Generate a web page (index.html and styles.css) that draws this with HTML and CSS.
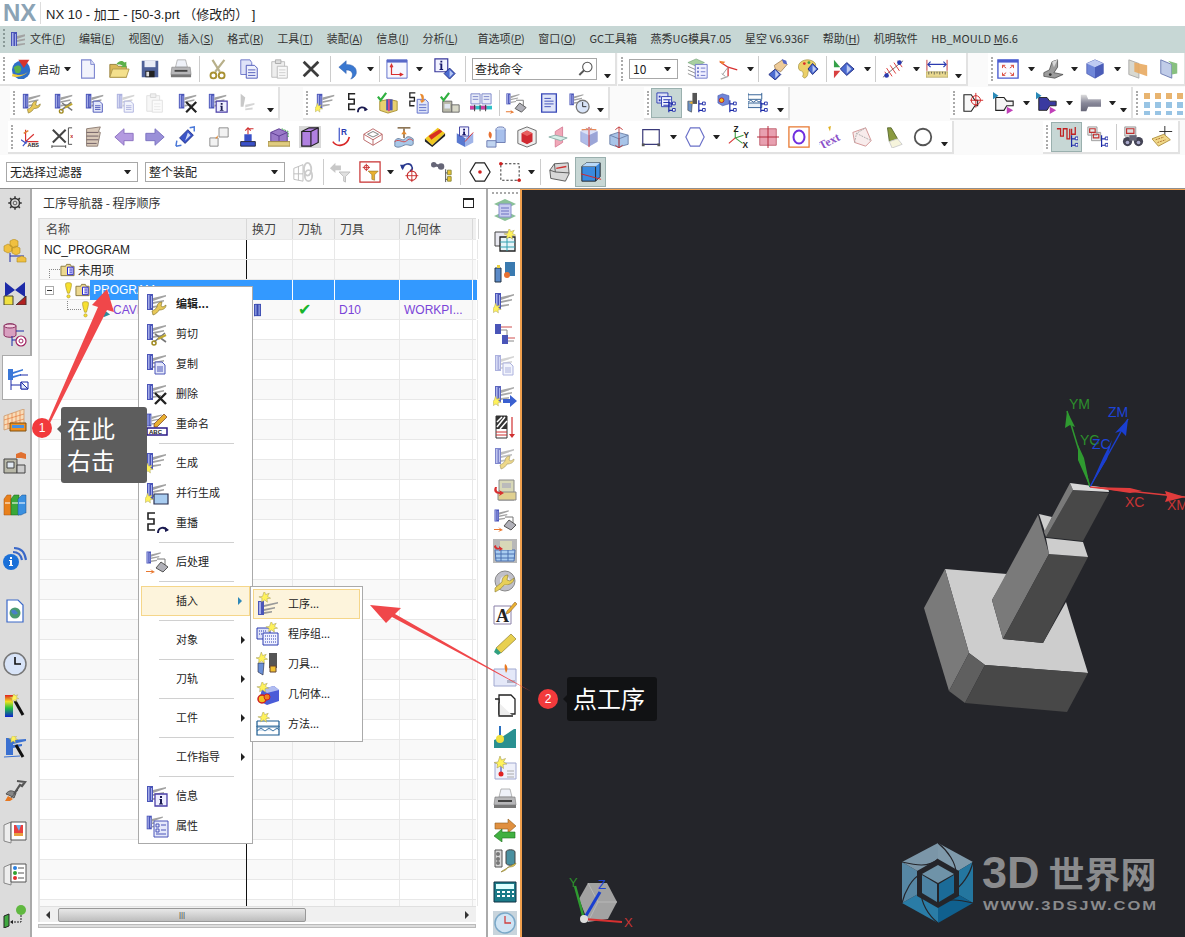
FILE: index.html
```html
<!DOCTYPE html>
<html lang="zh">
<head>
<meta charset="utf-8">
<title>NX 10 - 加工</title>
<link rel="stylesheet" href="styles.css">
</head>
<body>
<svg class="defs" aria-hidden="true">
<defs>
<g id="opb"><path d="M2 2h6v16H2z" fill="#4a55b8"/><path d="M3 3h1.500v14H3zM6 4h1v12H6z" fill="#a4ace8"/><path d="M8 6l13-3v1.500L8 9zM8 10l11-2v1.500L8 12zM8 14l8-1v1.500L8 16z" fill="#a2a2a2"/></g>
<g id="gw"><path d="M8 23c3-1 5-3 6-5 3 0 7-1 7-5l-3 2-2-1 1-4c-3 0-5 2-5 5-1 2-3 3-5 4z" fill="#e8c858" stroke="#8a7a30" stroke-width=".7"/></g>
<g id="gs"><path d="M10 12l11 8M20 11L9 20" stroke="#777" stroke-width="1.600"/><circle cx="9" cy="21" r="2" fill="none" stroke="#a08a20" stroke-width="1.500"/><path d="M13 17l8-4" stroke="#c0a830" stroke-width="2"/></g>
<g id="gc"><path d="M10 10h7l3 3v9H10z" fill="#e4e8fa" stroke="#4a55b8"/><path d="M12 15h6M12 17h6M12 19h6" stroke="#4a55b8"/></g>
<g id="gx"><path d="M10 11l11 11M21 11L10 22" stroke="#222" stroke-width="2.400"/></g>
<g id="gi"><path d="M10 10h12v12H10z" fill="#eef" stroke="#4a3fa8" stroke-width="1.300"/><path d="M15 12h2v2h-2zM14.500 15H17v4.500h1v1h-4v-1h1V16h-.5z" fill="#1a1a50"/></g>
<g id="gk"><path d="M7 0l1.500 4 4-1.500L10.500 6 14 8l-4 .5.500 4L7.500 10 4 12l.500-4L1 6.500l4-.5z" fill="#fff25a" stroke="#a8a060" stroke-width=".6"/></g>
<g id="gt"><path d="M14 9v13M14 13h4M14 20h4" stroke="#1c2aa8" stroke-width="1.300" fill="none"/><path d="M18 11h3v3h-3zM18 18h3v3h-3z" fill="#fff" stroke="#1c2aa8"/></g>
<g id="gcube"><path d="M12 2l9 4v11l-9 5-9-5V6z" fill="#6f86d8" stroke="#3f4ea8" stroke-width=".7"/><path d="M3 6l9 4 9-4-9-4z" fill="#bfcaf2"/><path d="M12 10v12l9-5V6z" fill="#4a5cb8"/></g>
<symbol id="start" viewBox="0 0 24 24"><circle cx="11" cy="13" r="10" fill="#2d6fc8"/><path d="M3 10c5-4 9-1 8 3s-3 4-6 3z" fill="#5cb04a"/><path d="M1 20c8 2 17-1 20-9-2 6-10 10-19 6z" fill="#f0c838"/><path d="M8 2h12l-6 9z" fill="#d8342c"/></symbol>
<symbol id="new" viewBox="0 0 24 24"><path d="M5 2h10l4 5v15H5z" fill="#f2f3fc" stroke="#7d86d0" stroke-width="1.200"/><path d="M15 2v5h4" fill="#dfe2f6" stroke="#7d86d0"/></symbol>
<symbol id="open" viewBox="0 0 24 24"><path d="M2 7h7l2 2h9v12H2z" fill="#d9b858" stroke="#96803c"/><path d="M2 21l3-9h18l-3 9z" fill="#f4e08c" stroke="#b09a50"/><path d="M9 7c2-4 7-5 9-2l2-1v6h-6l2-2c-2-1-4-1-7-1z" fill="#5cb04a"/></symbol>
<symbol id="save" viewBox="0 0 24 24"><path d="M3 3h18v18H3z" fill="#4e6198"/><path d="M6 3h12v7H6z" fill="#e8ecf6"/><path d="M7 14h10v7H7z" fill="#222"/><path d="M8 15h3v5H8z" fill="#ddd"/></symbol>
<symbol id="print" viewBox="0 0 24 24"><path d="M8 2h9l2 8H6z" fill="#eef1f8" stroke="#999" stroke-width=".7"/><path d="M2 10h20l1 8H1z" fill="#b6b6b8" stroke="#777" stroke-width=".6"/><path d="M1 18h22v3H1z" fill="#777"/><path d="M5 13h14v2H5z" fill="#444"/></symbol>
<symbol id="cut" viewBox="0 0 24 24"><path d="M6 2l8 13M19 2L9 15" stroke="#b8b08a" stroke-width="2.400"/><circle cx="7" cy="19" r="3.200" fill="none" stroke="#a89030" stroke-width="2"/><circle cx="16" cy="19" r="3.200" fill="none" stroke="#a89030" stroke-width="2"/></symbol>
<symbol id="copy" viewBox="0 0 24 24"><path d="M3 2h10l2 3v13H3z" fill="#dfe3f8" stroke="#6a74c8"/><path d="M9 8h9l3 3v11H9z" fill="#eef0fc" stroke="#4a55b8"/><path d="M11 13h8M11 16h8M11 19h8" stroke="#4a55b8"/></symbol>
<symbol id="paste" viewBox="0 0 24 24"><path d="M3 4h14v17H3z" fill="#eee" stroke="#bbb"/><path d="M7 2h6v4H7z" fill="#ddd" stroke="#aaa"/><path d="M9 9h11v13H9z" fill="#f8f8f8" stroke="#bbb"/><path d="M11 13h7M11 16h7M11 19h7" stroke="#ccc"/></symbol>
<symbol id="x" viewBox="0 0 24 24"><path d="M4 4l16 16M20 4L4 20" stroke="#3c3c3c" stroke-width="3"/></symbol>
<symbol id="undo" viewBox="0 0 24 24"><path d="M2 10l8-7v4c7 0 12 3 11 10-1 3-3 5-6 6 3-4 3-10-5-10v4z" fill="#3a78d0" stroke="#2a58a8" stroke-width=".5"/></symbol>
<symbol id="wcs" viewBox="0 0 24 24"><path d="M1 2h22v20H1z" fill="#f6f7ff" stroke="#5868c8"/><path d="M1 2h22v3H1z" fill="#5868c8"/><path d="M6 9v9h11M4.500 10L6 7l1.500 3M15 16.500l3 1.500-3 1.500" stroke="#d83030" fill="none" stroke-width="1.300"/></symbol>
<symbol id="infod" viewBox="0 0 24 24"><path d="M1 1h14v14H1z" fill="#f2f2ff" stroke="#38389c" stroke-width="1.300"/><path d="M7 3h2v2H7zM6 6h3v6h1v1H6v-1h1V7H6z" fill="#16166a"/><path d="M17 11l6 6-6 6-6-6z" fill="#4a6ad0" stroke="#1f2a80"/><path d="M17 13l4 4-4 4z" fill="#b8c8f2"/></symbol>
<symbol id="glass" viewBox="0 0 24 24"><circle cx="14" cy="9" r="7" fill="#fff" stroke="#555" stroke-width="1.600"/><path d="M9 14l-7 7" stroke="#555" stroke-width="3"/></symbol>
<symbol id="layers" viewBox="0 0 24 24"><path d="M1 5l9-4 9 4-9 4z" fill="#a8d0a0" stroke="#6a9a70" stroke-width=".6"/><path d="M1 9l9 4M1 13l9 4M1 17l9 4" stroke="#8a8a8a"/><path d="M9 7h13v15H9z" fill="#f0f0ff" stroke="#6a74c8"/><path d="M11 10h2v2h-2zM11 14h2v2h-2zM11 18h2v2h-2z" fill="#6a74c8"/><path d="M15 11h5M15 15h5M15 19h5" stroke="#6a74c8"/></symbol>
<symbol id="csys2" viewBox="0 0 24 24"><path d="M11 10L2 4M11 10v10M11 10l10 3" stroke="#d83030" stroke-width="1.400"/><path d="M1 3l7 1-3 3z" fill="#f08030"/><path d="M11 20l-8 3" stroke="#aaa" stroke-width="1.400"/><path d="M4 17l4 3M11 10l-6 8" stroke="#999"/></symbol>
<symbol id="hand" viewBox="0 0 24 24"><path d="M9 12l6 6-6 6-7-6z" fill="#4a6ad0" stroke="#1f2a80"/><path d="M9 13l4 5-4 4z" fill="#c0ccf2"/><path d="M8 8l9-6 5 5-7 8-6-3z" fill="#eecb98" stroke="#8a6a40" stroke-width=".7"/><path d="M16 1l5 2 1 4-4-1z" fill="#5464c8"/></symbol>
<symbol id="palette" viewBox="0 0 24 24"><path d="M2 7c3-6 14-7 18-1 2 5-4 7-7 7-2 4 0 7-5 9l-2-2c2-3 0-5-1-6-3 0-4-3-3-7z" fill="#ecd068" stroke="#9a8a3c" stroke-width=".7"/><circle cx="8" cy="6" r="1.500" fill="#d83030"/><circle cx="13" cy="5" r="1.500" fill="#3fa040"/><path d="M17 6l6 6-6 6-5-6z" fill="#4a6ad0" stroke="#1f2a80"/><path d="M17 8l4 4-4 4z" fill="#c0ccf2"/></symbol>
<symbol id="diamt" viewBox="0 0 24 24"><path d="M15 5l8 7-8 7-7-7z" fill="#4a6ad0" stroke="#1f2a80"/><path d="M15 7l5 5-5 5z" fill="#c0ccf2"/><path d="M1 2l7 8H1z" fill="#34a048"/><path d="M1 14h7l-7 8z" fill="#d84040"/></symbol>
<symbol id="hatch" viewBox="0 0 24 24"><path d="M1 21L23 3" stroke="#444" stroke-width=".8"/><path d="M5 11l6 9M9 8l6 9M13 5l6 9M3 15l4 5M17 3l5 7" stroke="#d83030"/><circle cx="19" cy="5" r="2.500" fill="#2a3ab0"/><circle cx="5" cy="19" r="2.500" fill="#2a3ab0"/></symbol>
<symbol id="ruler" viewBox="0 0 24 24"><path d="M1 2v12M23 2v12" stroke="#c03030"/><path d="M2 7h20M5 4L2 7l3 3M19 4l3 3-3 3" stroke="#2a3ab0" fill="none" stroke-width="1.200"/><path d="M0 15h24v6H0z" fill="#e8d890" stroke="#998a40" stroke-width=".6"/><path d="M3 15v3M6 15v2M9 15v3M12 15v2M15 15v3M18 15v2M21 15v3" stroke="#665"/></symbol>
<symbol id="fit" viewBox="0 0 24 24"><path d="M1 2h22v20H1z" fill="#fbfbff" stroke="#4a5cd0" stroke-width="1.500"/><path d="M1 2h22v3H1z" fill="#4a5cd0"/><path d="M6 8l4 3M6 8h3M6 8v3M18 8l-4 3M18 8h-3M18 8v3M6 19l4-3M6 19h3M6 19v-3M18 19l-4-3M18 19h-3M18 19v-3" stroke="#d84030" fill="none"/></symbol>
<symbol id="bracket" viewBox="0 0 24 24"><path d="M2 16l6-3 3-9 6-2v8l-4 6 10 2-9 4-12-2z" fill="#9c9c9c" stroke="#444" stroke-width=".8"/><path d="M11 4l6-2-4 8z" fill="#d8d8d8"/><circle cx="9" cy="18" r="1.500" fill="#333"/></symbol>
<symbol id="cube" viewBox="0 0 24 24"><use href="#gcube"/></symbol>
<symbol id="planeo" viewBox="0 0 24 24"><path d="M2 2l11 4v16L2 18z" fill="#d8d8d0" stroke="#aaa"/><path d="M8 5l14 3v12L8 15z" fill="#e8aa60" opacity=".9"/></symbol>
<symbol id="planeg" viewBox="0 0 24 24"><path d="M3 2l12 5v15L3 17z" fill="#c0cce8" stroke="#6a7ab0"/><path d="M11 3l10 3v11l-6 1V7z" fill="#88c080"/></symbol>
<symbol id="ow" viewBox="0 0 24 24"><use href="#opb"/><use href="#gw"/></symbol>
<symbol id="os" viewBox="0 0 24 24"><use href="#opb"/><use href="#gs"/></symbol>
<symbol id="oc" viewBox="0 0 24 24"><use href="#opb"/><use href="#gc"/></symbol>
<symbol id="ox" viewBox="0 0 24 24"><use href="#opb"/><use href="#gx"/></symbol>
<symbol id="oi" viewBox="0 0 24 24"><use href="#opb"/><use href="#gi"/></symbol>
<symbol id="ocg" viewBox="0 0 24 24"><g opacity=".45"><use href="#opb"/><use href="#gc"/></g></symbol>
<symbol id="ogr" viewBox="0 0 24 24"><g opacity=".4"><path d="M4 2l5 4-2 10H4z" fill="#777"/><path d="M9 14l10-2v2L9 17zM9 18l8-1v2l-8 1z" fill="#999"/></g></symbol>
<symbol id="gen" viewBox="0 0 24 24"><use href="#opb"/><g transform="translate(-3 12) scale(.8)"><use href="#gk"/></g></symbol>
<symbol id="genp" viewBox="0 0 24 24"><use href="#opb"/><g transform="translate(-3 12) scale(.8)"><use href="#gk"/></g><path d="M9 13h14v10H9z" fill="#a8ccf0" stroke="#2a3050" stroke-width="1.200"/></symbol>
<symbol id="replay" viewBox="0 0 24 24"><path d="M10 2H3v6h6v5H3v6h7" fill="none" stroke="#222" stroke-width="1.600"/><path d="M13 22c0-6 7-7 9-2" fill="none" stroke="#1a1a50" stroke-width="2"/><path d="M20 16l4 3-4 2z" fill="#1a1a50"/></symbol>
<symbol id="chk" viewBox="0 0 24 24"><path d="M3 10l10-2 9 2v10l-10 3-9-3z" fill="#e8d070" stroke="#a89030"/><path d="M10 8h7v12h-7z" fill="#4a55b8"/><path d="M12 8h2v13h-2z" fill="#d84888"/><path d="M1 5l3 4 6-8" fill="none" stroke="#30b040" stroke-width="2.400"/></symbol>
<symbol id="sdoc" viewBox="0 0 24 24"><path d="M8 1H2v5h5v4H2v5h5" fill="none" stroke="#222" stroke-width="1.400"/><path d="M10 8h9l3 3v12H10z" fill="#dfe5f8" stroke="#5a6ac8"/><path d="M12 14h8M12 17h8M12 20h8" stroke="#5a6ac8"/><path d="M13 2c4 0 5 3 4 7l2 0-4 3-2-3h2c0-3-1-5-2-7z" fill="#e88a30"/></symbol>
<symbol id="chkm" viewBox="0 0 24 24"><path d="M4 10h10v12H4z" fill="#b8b8a8" stroke="#666"/><path d="M14 14h8v8h-8z" fill="#d8d8c8" stroke="#666"/><path d="M6 13h6v5H6z" fill="#dfe5f0"/><path d="M2 5l3 4 6-8" fill="none" stroke="#30b040" stroke-width="2.400"/></symbol>
<symbol id="book" viewBox="0 0 24 24"><path d="M1 2h10v11H1zM13 2h10v11H13z" fill="#e8ecf8" stroke="#7a84c8"/><path d="M3 5h6M3 8h6M15 5h6M15 8h6" stroke="#7a84c8"/><path d="M0 15h24v4H0z" fill="#30c0c8"/><path d="M0 15h6v4H0zM12 15h6v4h-6z" fill="#d040a0"/><path d="M5 14v7M11 14v7M17 14v7" stroke="#333"/></symbol>
<symbol id="post" viewBox="0 0 24 24"><use href="#opb" transform="scale(.75)"/><path d="M12 9h8v6" fill="none" stroke="#777"/><path d="M11 18l5-6 7 5-5 5z" fill="#b0b0b8" stroke="#555"/><path d="M1 21h6l-2-2 5 3-5 2 2-2H1z" fill="#e87830"/></symbol>
<symbol id="docb" viewBox="0 0 24 24"><path d="M4 2h16v20H4z" fill="#dfe5f8" stroke="#3a4ab8" stroke-width="1.500"/><path d="M7 7h7M7 10h10M7 13h10M7 16h7" stroke="#3a4ab8"/></symbol>
<symbol id="oclock" viewBox="0 0 24 24"><use href="#opb" transform="scale(.8)"/><circle cx="16" cy="16" r="7" fill="#d8e4f8" stroke="#777" stroke-width="1.400"/><path d="M16 11v5h4" stroke="#222" fill="none"/></symbol>
<symbol id="tprog" viewBox="0 0 24 24"><path d="M1 1h12v11H1z" fill="#dfe3f8" stroke="#2a3ab0"/><path d="M6 5h11v11H6z" fill="#f0f2ff" stroke="#2a3ab0"/><path d="M3 4h2v2H3zM3 8h2v2H3zM8 8h8v1H8zM8 11h8v1H8zM8 14h8v1H8z" fill="#2a3ab0"/><use href="#gt"/></symbol>
<symbol id="ttool" viewBox="0 0 24 24"><path d="M2 10h5l-1 12-4-2z" fill="#6a90c8" stroke="#333" stroke-width=".6"/><path d="M7 1h5v12H7z" fill="#555"/><path d="M3 12l4-2v3z" fill="#f0b020"/><use href="#gt"/></symbol>
<symbol id="tgeom" viewBox="0 0 24 24"><path d="M6 2l7 2v9l-7 2-5-3V4z" fill="#6f86d8" stroke="#3f4ea8" stroke-width=".6"/><circle cx="5" cy="9" r="2.500" fill="#f0c020" stroke="#c02020"/><use href="#gt"/></symbol>
<symbol id="tmeth" viewBox="0 0 24 24"><path d="M0 3h15M0 1v7h15V1M0 11l3-2 3 2 3-2 3 2 3-2" stroke="#2a5a90" fill="none"/><path d="M0 12h15v5H0z" fill="#e8f0f8" stroke="#2a5a90"/><use href="#gt"/></symbol>
<symbol id="sh1" viewBox="0 0 24 24"><path d="M1 3h8l4 6h3v6h-3l-4 6H1z" fill="#f8f8f8" stroke="#222" stroke-width="1.200"/><circle cx="14" cy="9" r="5" fill="none" stroke="#d02020"/><path d="M14 1v16M8 9h14" stroke="#d02020"/></symbol>
<symbol id="sh2" viewBox="0 0 24 24"><path d="M3 6h9l3 4h7v5h-7l-3 5H3z" fill="#f4f4f4" stroke="#222" stroke-width="1.200"/><path d="M0 0l6 4-6 4z" fill="#2a8ab8"/><path d="M15 16l7 4-7 4z" fill="#c040b8"/></symbol>
<symbol id="sh3" viewBox="0 0 24 24"><path d="M3 6h9l3 4h7v5h-7l-3 5H3z" fill="#3a3aa0" stroke="#222"/><path d="M0 0l6 4-6 4z" fill="#2a8ab8"/><path d="M15 16l7 4-7 4z" fill="#c040b8"/></symbol>
<symbol id="tl" viewBox="0 0 24 24"><defs><linearGradient id="gm" x1="0" y1="0" x2="0" y2="1"><stop offset="0" stop-color="#ddd"/><stop offset=".5" stop-color="#889"/><stop offset="1" stop-color="#667"/></linearGradient></defs><path d="M2 3h6l2 5h14v8H10l-2 5H2z" fill="url(#gm)"/></symbol>
<symbol id="grid" viewBox="0 0 42 24"><path d="M1 2h6v6H1zM12 2h6v6h-6zM23 2h6v6h-6zM34 2h6v6h-6z" fill="#e8b470"/><path d="M1 11h6v6H1zM12 11h6v6h-6zM23 11h6v6h-6zM34 11h6v6h-6zM1 20h6v4H1zM12 20h6v4h-6zM23 20h6v4h-6zM34 20h6v4h-6z" fill="#98c4e4"/></symbol>
<symbol id="abs" viewBox="0 0 24 24"><path d="M5 17L5 4M5 17h14M5 17l9-8" stroke="#d83030" fill="none" stroke-width="1.300"/><path d="M2 22l5-6M0 15l6 4" stroke="#3a50c8" stroke-width="1.300"/><path d="M3 8l5-3" stroke="#e08030" stroke-width="1.600"/><text x="7" y="23" class="mini">ABS</text></symbol>
<symbol id="xd" viewBox="0 0 24 24"><path d="M2 4l14 14M16 4L2 18" stroke="#444" stroke-width="2.200"/><path d="M19 2h4M19 2v18M19 20h4M1 21v3M1 22h15M16 21v3" stroke="#444"/><text x="21" y="13" class="mini red">x</text></symbol>
<symbol id="sheets" viewBox="0 0 24 24"><path d="M5 3l15-2-2 5 2 1-3 15H5z" fill="#d8c8b8" stroke="#8a7a70"/><path d="M5 7h13M5 11h13M5 15h13M5 19h11" stroke="#6a5a60"/></symbol>
<symbol id="la" viewBox="0 0 24 24"><path d="M2 12l10-9v5h10v8H12v5z" fill="#b49ae0" stroke="#8a70c0"/></symbol>
<symbol id="ra" viewBox="0 0 24 24"><path d="M22 12l-10-9v5H2v8h10v5z" fill="#9a90d8" stroke="#7a70c0"/></symbol>
<symbol id="dia2" viewBox="0 0 24 24"><path d="M14 4l6 6-9 9-6-6z" fill="#3a54c8" stroke="#20308a"/><path d="M14 7l3 3-6 6z" fill="#d0daf8"/><path d="M16 2l5-1v5M1 22l1-6M1 22l6-1" stroke="#4a78d8" stroke-width="1.600" fill="none"/></symbol>
<symbol id="sq2" viewBox="0 0 24 24"><path d="M2 13h9v9H2zM12 2h10v10H12z" fill="#f2f2f2" stroke="#888"/><path d="M5 16l6-6-1 4-2-1z" fill="#e88a30"/></symbol>
<symbol id="tee" viewBox="0 0 24 24"><path d="M8 9h8v8H8z" fill="#3a50c8"/><path d="M4 17h16v5H4z" fill="#3a50c8" stroke="#223"/><path d="M12 9V2M9 5l3-3 3 3M12 3h6" fill="none" stroke="#d03030" stroke-width="1.200"/></symbol>
<symbol id="cubep" viewBox="0 0 24 24"><path d="M3 7l9-4 9 4v10H3z" fill="#9a7ac8" stroke="#5a3a90"/><path d="M3 7l9 4 9-4" stroke="#5a3a90" fill="none"/><path d="M12 11v6" stroke="#5a3a90"/><path d="M0 17h24v5H0z" fill="#e0cc80" stroke="#a08a40"/><path d="M15 3l7 3v6" stroke="#30a040" fill="none" stroke-dasharray="2 1"/></symbol>
<symbol id="wirep" viewBox="0 0 24 24"><path d="M0 0h24v24H0z" fill="#d8d8d8"/><path d="M3 6l8-4h10v16l-8 4H3z" fill="#b080e0" stroke="#222" stroke-width="1.300"/><path d="M3 6h10v16M13 6l8-4" fill="none" stroke="#222" stroke-width="1.300"/></symbol>
<symbol id="rarc" viewBox="0 0 24 24"><path d="M2 17c4 6 15 6 18-5" fill="none" stroke="#d82828" stroke-width="1.800"/><path d="M9 2v15" stroke="#3a50c8" stroke-width="1.300"/><text x="11" y="10" class="mini blue big">R</text></symbol>
<symbol id="wirer" viewBox="0 0 24 24"><path d="M2 9l10-6 10 6-10 6zM2 9v6l10 6 10-6V9M12 15v6" fill="none" stroke="#b86060"/><path d="M6 9l6-3 6 3-6 3z" fill="none" stroke="#777"/></symbol>
<symbol id="surf" viewBox="0 0 24 24"><path d="M2 16c5-6 8 2 11-2s6-2 9 0v6c-3 3-6-1-10 1s-7 3-10 1z" fill="#a8c8e8" stroke="#6a80a0"/><path d="M5 2h14M12 3v10" stroke="#6a4a20" stroke-width="1.400"/><path d="M9 9l3-4 3 4z" fill="#e08a30"/><path d="M2 17c5-4 9 3 13-1s6 0 7 0" stroke="#d84040" fill="none"/></symbol>
<symbol id="stripes" viewBox="0 0 24 24"><path d="M1 14L15 2l8 6-14 13z" fill="#f0c820"/><path d="M5 11L17 3.500l3 2.500L8 15z" fill="#d83020"/><path d="M1 14l8 7 14-13v3L9 23l-8-6z" fill="#222"/></symbol>
<symbol id="infoc" viewBox="0 0 24 24"><path d="M3 8l9 5v10l-9-5z" fill="#5878d0"/><path d="M12 13l9-5v10l-9 5z" fill="#a0b4e8"/><path d="M6 1h10v10H6z" fill="#f2f2ff" stroke="#38389c"/><path d="M10 3h2v2h-2zM10 6h2v3h1v1H9V9h1z" fill="#16166a"/><path d="M12 17l9-10" stroke="#d83030"/></symbol>
<symbol id="cyl" viewBox="0 0 24 24"><ellipse cx="17" cy="4" rx="5" ry="3" fill="#c8d8f4" stroke="#6a7ab0"/><path d="M12 4v14h10V4" fill="#a8c0ec" stroke="#6a7ab0"/><path d="M2 16h10v7H2z" fill="#c0d4f0" stroke="#6a7ab0"/><path d="M5 6c3 1 3 5 1 8-2-2-3-5-1-8z" fill="#e87030"/></symbol>
<symbol id="cuber" viewBox="0 0 24 24"><path d="M2 5l10-4 10 4v14l-10 4-10-4z" fill="#eee" stroke="#666"/><path d="M6 8l6-3 6 3v9l-6 3-6-3z" fill="#d02830"/><path d="M6 8l6 3 6-3-6-3z" fill="#e86060"/></symbol>
<symbol id="planep" viewBox="0 0 24 24"><path d="M9 6l8-5v17l-8 5z" fill="#f0a8b8" stroke="#d88098"/><path d="M2 12l7-2 13 3-7 3z" fill="#d8eee8" stroke="#8ab0a8"/></symbol>
<symbol id="cubearr" viewBox="0 0 24 24"><use href="#gcube" opacity=".55"/><path d="M12 1v22" stroke="#d83030"/><path d="M4 4h7l-2-2M20 4h-7l2-2" stroke="#e87030" fill="none"/></symbol>
<symbol id="cubeax" viewBox="0 0 24 24"><path d="M2 10l9-3 11 3v10l-11 3-9-3z" fill="#a8c4e8" stroke="#6a80a8"/><path d="M2 10l10 4 10-4M12 14v9" stroke="#6a80a8" fill="none"/><path d="M12 1v23M8 4l4-3 4 3M8 21l4 3 4-3" stroke="#c03030" fill="none"/></symbol>
<symbol id="rect" viewBox="0 0 24 24"><path d="M3 4h18v16H3z" fill="#fff" stroke="#3a3a7a" stroke-width="1.300"/><path d="M2 19h3v3H2zM19 19h3v3h-3z" fill="#555"/></symbol>
<symbol id="hexo" viewBox="0 0 24 24"><path d="M7 2h10l5 10-5 10H7L2 12z" fill="#fff" stroke="#6a70c8" stroke-width="1.300"/></symbol>
<symbol id="xyz" viewBox="0 0 24 24"><path d="M9 13V4M9 13l9-3M9 13l8 6" stroke="#3aa040" stroke-width="1.200"/><path d="M9 13l-7 6" stroke="#d83030" stroke-width="1.200"/><text x="7" y="6" class="mini dark big">Z</text><text x="18" y="13" class="mini dark big">Y</text><text x="17" y="24" class="mini dark big">X</text></symbol>
<symbol id="redt" viewBox="0 0 24 24"><path d="M3 3h18v18H3z" fill="#e8a0b0" stroke="#c06070"/><path d="M12 0v24M0 12h24" stroke="#b02030"/></symbol>
<symbol id="oo" viewBox="0 0 24 24"><path d="M1 1h22v22H1z" fill="#fff" stroke="#e87830" stroke-width="1.400"/><ellipse cx="12" cy="12" rx="6" ry="7" fill="none" stroke="#7030e0" stroke-width="2.200"/></symbol>
<symbol id="textt" viewBox="0 0 24 24"><text x="-3" y="20" class="ttxt" transform="rotate(-28 12 12)">Text</text><path d="M10 1l3-1-1 6z" fill="#e0b020"/></symbol>
<symbol id="ghost" viewBox="0 0 24 24"><path d="M2 7l14-5 6 14-6 6-12-4z" fill="#f8ecec" stroke="#d09090"/><path d="M4 18l2-10 10-6M6 8l16 8" stroke="#aaa" stroke-dasharray="2 1" fill="none"/></symbol>
<symbol id="lamp" viewBox="0 0 24 24"><path d="M6 2l4 0 7 12-9 3z" fill="#8a9a40" stroke="#5a6a30"/><path d="M8 17l9-3 5 6-11 4z" fill="#f6f4dc" stroke="#ccc"/></symbol>
<symbol id="circ" viewBox="0 0 24 24"><circle cx="12" cy="12" r="9" fill="#fff" stroke="#555" stroke-width="2"/></symbol>
<symbol id="seq1" viewBox="0 0 24 24"><path d="M1 3h4v8h3V3h4v11h3V3M17 3v6h4V1" fill="none" stroke="#c02020" stroke-width="1.400"/><use href="#gt" transform="translate(3 1)"/></symbol>
<symbol id="seq2" viewBox="0 0 24 24"><path d="M2 1h10v9H2zM6 7h10v9H6z" fill="#e8e8e8" stroke="#999"/><path d="M4 3h6v4H4zM8 9h6v4H8z" fill="none" stroke="#c03030" stroke-width="1.300"/><use href="#gt" transform="translate(3 1)"/></symbol>
<symbol id="bino" viewBox="0 0 24 24"><path d="M3 1h12v10H3z" fill="#ddd" stroke="#999"/><path d="M5 3h8v5H5z" fill="none" stroke="#c03030" stroke-width="1.300"/><circle cx="6" cy="17" r="5" fill="#445"/><circle cx="18" cy="17" r="5" fill="#445"/><path d="M8 10h8v6H8z" fill="#667"/><circle cx="6" cy="18" r="2" fill="#aac"/><circle cx="18" cy="18" r="2" fill="#aac"/></symbol>
<symbol id="tag" viewBox="0 0 24 24"><path d="M14 0v14M8 6h14" stroke="#222"/><path d="M0 14l13-5 7 6-13 7z" fill="#f0d888" stroke="#b09040"/><path d="M4 15l9-3M6 18l9-3" stroke="#b07030" stroke-dasharray="2 1"/></symbol>
<symbol id="link" viewBox="0 0 24 24"><path d="M2 8l10-4v18L2 20zM2 14l10 0M7 6v15" fill="none" stroke="#bbb"/><ellipse cx="17" cy="9" rx="4" ry="7" fill="none" stroke="#ccc" stroke-width="2"/><ellipse cx="18" cy="16" rx="4" ry="6" fill="none" stroke="#ccc" stroke-width="2"/></symbol>
<symbol id="fun" viewBox="0 0 24 24"><path d="M1 8l6-6v3h6v5H7v3z" fill="#c8c8c8"/><path d="M11 12h12l-5 5v6l-2-1v-5z" fill="#e0e0e0" stroke="#bbb"/></symbol>
<symbol id="redf" viewBox="0 0 24 24"><path d="M1 1h22v22H1z" fill="#fff" stroke="#c83030" stroke-width="1.300"/><circle cx="8" cy="7" r="2.500" fill="none" stroke="#c83030"/><path d="M8 3v8M4 7h8" stroke="#c83030"/><path d="M10 11h11l-4 4v6l-3-1v-5z" fill="#e8b030" stroke="#8a6a20" stroke-width=".6"/></symbol>
<symbol id="undot" viewBox="0 0 24 24"><path d="M3 8c2-5 9-7 11-2 1 2 0 4-2 5" fill="none" stroke="#2a3a90" stroke-width="1.800"/><path d="M1 4l6 0-3 6z" fill="#2a3a90"/><circle cx="14" cy="16" r="5" fill="none" stroke="#c83030" stroke-width="1.400"/><path d="M14 9v14M7 16h14" stroke="#c83030"/></symbol>
<symbol id="binot" viewBox="0 0 24 24"><circle cx="3" cy="4" r="3" fill="#667"/><circle cx="11" cy="6" r="3.500" fill="#667"/><path d="M3 4l8 2" stroke="#667" stroke-width="3"/><path d="M16 9v14M16 13h4M16 20h4" stroke="#444" fill="none"/><path d="M18 10h4v5h-4zM18 17h4v5h-4z" fill="#e8c030" stroke="#8a8a40"/></symbol>
<symbol id="hexd" viewBox="0 0 24 24"><path d="M7 2h10l6 10-6 10H7L1 12z" fill="#fff" stroke="#222" stroke-width="1.300"/><circle cx="12" cy="12" r="2" fill="#d02020"/></symbol>
<symbol id="dash" viewBox="0 0 24 24"><path d="M2 3h20v18H2z" fill="none" stroke="#222" stroke-dasharray="2.500 2"/><circle cx="2" cy="3" r="2" fill="#d02020"/><circle cx="22" cy="21" r="2" fill="#d02020"/></symbol>
<symbol id="gbox" viewBox="0 0 24 24"><path d="M2 10l5-7 15-1 1 12-4 8-16-3z" fill="#d8d8d8" stroke="#555"/><path d="M7 3l1 9 15 1M2 10l6 2" fill="none" stroke="#555"/><path d="M9 8l11-2" stroke="#d03030" stroke-width="1.500"/></symbol>
<symbol id="acube" viewBox="0 0 24 24"><path d="M2 6l5-4h15v15l-5 5H2z" fill="#3a8ae0" stroke="#222"/><path d="M2 6h15v16" fill="none" stroke="#222"/><path d="M2 6l5-4h15l-5 4z" fill="#b8d8f8"/><path d="M1 14l22 6" stroke="#e02020"/></symbol>
<symbol id="gear" viewBox="0 0 24 24"><circle cx="12" cy="12" r="6" fill="none" stroke="#333" stroke-width="2"/><circle cx="12" cy="12" r="2.500" fill="none" stroke="#333"/><path d="M12 3v3M12 18v3M3 12h3M18 12h3M5.500 5.500l2 2M16.500 16.500l2 2M18.500 5.500l-2 2M5.500 18.500l2-2" stroke="#333" stroke-width="2"/></symbol>
<symbol id="cubes" viewBox="0 0 24 24"><path d="M1 7l4-2 4 2v5l-4 2-4-2zM7 2l4-2 4 2v5l-4 2-4-2zM9 9l4-2 4 2v5l-4 2-4-2z" fill="#f0c040" stroke="#b08a20" stroke-width=".6"/><path d="M7 14v9M7 17h14" stroke="#1c2aa8"/><path d="M14 19l5-2 4 2v4h-9z" fill="#f0c040" stroke="#b08a20" stroke-width=".6"/></symbol>
<symbol id="bow" viewBox="0 0 24 24"><path d="M2 1l10 8L22 1v15L12 9 2 16z" fill="#1c2aa8"/><path d="M1 15h9v9H1z" fill="#f0e040" stroke="#443"/><path d="M13 24l10-9v9z" fill="#b02020" stroke="#433"/></symbol>
<symbol id="cylt" viewBox="0 0 24 24"><path d="M1 3c0-3 12-3 12 0v9c0 3-12 3-12 0z" fill="#d8a0c0" stroke="#8a3060"/><ellipse cx="7" cy="3" rx="6" ry="2" fill="#f0d0e0" stroke="#8a3060"/><path d="M9 13v10M9 17h4M13 8h8" stroke="#1c2aa8"/><circle cx="18" cy="18" r="5" fill="#fff" stroke="#a02060" stroke-width="1.200"/><circle cx="18" cy="18" r="2" fill="none" stroke="#a02060"/></symbol>
<symbol id="optree" viewBox="0 0 24 24"><path d="M2 2h5v11H2z" fill="#3a78d8"/><path d="M7 5l10-3v1.500L7 7zM7 9l8-2v1.500L7 11z" fill="#3a78d8"/><path d="M5 13v10M5 18h10M14 8h8M15 15h7v7h-7z" stroke="#1c2aa8" fill="none"/><path d="M15 15l7 7h-7z" fill="#dfe8fa" stroke="#1c2aa8"/></symbol>
<symbol id="tbl" viewBox="0 0 24 24"><path d="M1 7l20-7v15L1 21z" fill="#f8dcb8" stroke="#c89060" stroke-width=".7"/><path d="M5 6v14M9 4v15M13 3v14M17 2v14M1 11l20-6M1 16l20-6" stroke="#e07030" stroke-width=".6"/><path d="M7 14h16v8H7z" fill="#f09020" stroke="#805010"/><path d="M9 16h12v3H9z" fill="#4a90e0"/></symbol>
<symbol id="mach" viewBox="0 0 24 24"><path d="M1 8h13v14H1z" fill="#b8b8a8" stroke="#444"/><path d="M4 11h7v6H4z" fill="#e0e8f0" stroke="#444"/><path d="M14 14h8v8h-8z" fill="#ccc" stroke="#444"/><path d="M13 3l5-2v6h-5zM18 1l5 2v5l-5-1z" fill="#e07030"/></symbol>
<symbol id="books" viewBox="0 0 24 24"><path d="M1 6l3-4h4v20H1z" fill="#e8801c" stroke="#a05010" stroke-width=".5"/><path d="M8 6l3-4h5v20H8z" fill="#3aa838" stroke="#186018" stroke-width=".5"/><path d="M15 6l4-4h4v18h-1l-4 2h-3z" fill="#3a90e0" stroke="#185090" stroke-width=".5"/><path d="M2 10h5M9 10h6M16 10h6" stroke="#fff"/></symbol>
<symbol id="wifi" viewBox="0 0 24 24"><circle cx="8" cy="16" r="8" fill="#1a70d8"/><path d="M7 11h2v2H7zM6 14h3v5h1v1H6v-1h1v-4H6z" fill="#fff"/><path d="M10 6c5 0 8 3 9 8M11 2c7 0 11 5 12 12" stroke="#3a68c8" stroke-width="2.200" fill="none"/></symbol>
<symbol id="docg" viewBox="0 0 24 24"><path d="M4 1h11l5 5v17H4z" fill="#fff" stroke="#3a68c8" stroke-width="1.200"/><circle cx="12" cy="14" r="5.500" fill="#4a9a70"/><path d="M8 12c3-3 5 0 7 2-3 3-6 1-7-2z" fill="#4a80c8"/></symbol>
<symbol id="clock" viewBox="0 0 24 24"><circle cx="12" cy="12" r="11" fill="#d8e4f8" stroke="#777" stroke-width="1.500"/><path d="M12 5v7h6" stroke="#111" stroke-width="1.600" fill="none"/></symbol>
<symbol id="wand" viewBox="0 0 24 24"><defs><linearGradient id="rb" x1="0" y1="0" x2="0" y2="1"><stop offset="0" stop-color="#e02020"/><stop offset=".3" stop-color="#f0e020"/><stop offset=".6" stop-color="#20c040"/><stop offset="1" stop-color="#1020d0"/></linearGradient></defs><path d="M2 1h8v22H2z" fill="url(#rb)"/><path d="M12 7l8 14" stroke="#111" stroke-width="3"/><g transform="translate(6 -1) scale(.7)"><use href="#gk"/></g></symbol>
<symbol id="opw" viewBox="0 0 24 24"><path d="M3 2h7v17H3z" fill="#3a70d0"/><path d="M10 4l13-1v2L10 8zM10 9l9-1v2l-9 2z" fill="#3a70d0"/><path d="M1 21l16-1" stroke="#3a70d0"/><path d="M13 9l7 12" stroke="#111" stroke-width="3"/><g transform="translate(5 -2) scale(.7)"><use href="#gk"/></g></symbol>
<symbol id="tools" viewBox="0 0 24 24"><path d="M6 22l9-10M3 16c3-5 8-3 10-1l-2 5c-3-2-5-3-8-4z" fill="#888" stroke="#555"/><path d="M14 3l8 1-3 4-2-1-6 9" stroke="#555" stroke-width="2.200" fill="none"/><path d="M2 23l3-5 5 3-3 2z" fill="#e87820"/></symbol>
<symbol id="bk1" viewBox="0 0 24 24"><path d="M1 5l7-3v21l-7-2z" fill="#eee" stroke="#888"/><path d="M8 2h15v18H8z" fill="#fff" stroke="#555"/><path d="M11 5h9v11h-9z" fill="#e84040"/><path d="M13 5h5l-2 6z" fill="#6ab0f0"/><path d="M11 13h9v3h-9z" fill="#e8a040"/></symbol>
<symbol id="bk2" viewBox="0 0 24 24"><path d="M1 5l7-3v21l-7-2z" fill="#eee" stroke="#888"/><path d="M8 2h15v18H8z" fill="#fff" stroke="#555"/><circle cx="12" cy="6" r="2" fill="#2a80e0"/><circle cx="12" cy="11" r="2" fill="#30a030"/><circle cx="12" cy="16" r="2" fill="#e03030"/><path d="M15 6h6M15 11h6M15 16h6" stroke="#555"/></symbol>
<symbol id="door" viewBox="0 0 24 24"><circle cx="18" cy="6" r="5" fill="#60b840"/><path d="M1 12l5-2v12l-5 2z" fill="#40a840" stroke="#222"/><path d="M8 18h10V11" stroke="#222" stroke-dasharray="2 1" fill="none"/><path d="M7 18l3-2v4z" fill="#222"/></symbol>
<symbol id="v1" viewBox="0 0 24 24"><path d="M1 6l11-5 11 5-11 5z" fill="#8ac098"/><path d="M1 18l11-5 11 5-11 5z" fill="#8ac098"/><path d="M6 6h12v13H6z" fill="#c8ccf0" stroke="#8a90d0"/><path d="M8 10h8M8 13h8M8 16h8" stroke="#6a70c0"/></symbol>
<symbol id="v2" viewBox="0 0 24 24"><path d="M2 3h14v14H2z" fill="#e8e8f0" stroke="#444"/><path d="M7 8h15v14H7z" fill="#e8f4f8" stroke="#222" stroke-width="1.300"/><path d="M7 13h15M7 18h15M14 8v14" stroke="#30a0b0"/><g transform="translate(10 -1) scale(.9)"><use href="#gk"/></g></symbol>
<symbol id="v3" viewBox="0 0 24 24"><path d="M2 8h6v14H2z" fill="#5a8ac8" stroke="#234"/><path d="M4 5h3v3H4z" fill="#e8d040"/><path d="M12 2h10v14H12z" fill="#3a7ab0"/><circle cx="14" cy="15" r="3" fill="#e87030"/></symbol>
<symbol id="v5" viewBox="0 0 24 24"><path d="M2 2h6v10H2zM9 13h6v9H9z" fill="#4a55b8"/><path d="M8 5h11M15 16h7" stroke="#e08a8a" stroke-width="1.500"/><path d="M8 8h6v5M15 19h6" stroke="#888" fill="none"/></symbol>
<symbol id="v7" viewBox="0 0 24 24"><use href="#opb" opacity=".9"/><path d="M10 15h7v-4l7 6-7 6v-4h-7z" fill="#3a60d0"/><g transform="translate(-3 12) scale(.8)"><use href="#gk"/></g></symbol>
<symbol id="v8" viewBox="0 0 24 24"><path d="M3 1h11v22H3z" fill="#fff" stroke="#333"/><path d="M3 1h11v13H3z" fill="#333"/><path d="M4 12L12 2M4 7l5-5M7 14l7-8" stroke="#fff" stroke-width="1.500"/><path d="M3 17h11M3 20h11" stroke="#d03030"/><path d="M19 2v19" stroke="#d03030" stroke-width="1.200"/><path d="M16 19l3 4 3-4z" fill="#d03030"/></symbol>
<symbol id="v10" viewBox="0 0 24 24"><path d="M6 3h15v20H6z" fill="#d8d8b8" stroke="#888"/><path d="M9 6h9v5H9z" fill="#bbb"/><path d="M5 15h18v8H5z" fill="#e0d090" stroke="#888"/><path d="M2 10c-2 4 0 7 5 7l-1 2 5-3-5-3 1 2c-3 0-4-2-3-5z" fill="#d83030"/></symbol>
<symbol id="v12" viewBox="0 0 24 24"><path d="M0 0h24v24H0z" fill="#b8b8b8"/><path d="M2 11h20l-1 11H3z" fill="#a8ccf0" stroke="#4a70b0"/><path d="M2 15h20M2 19h20M8 11v11M15 11v11" stroke="#4a70b0"/><path d="M7 2h12v9H7z" fill="#d8d8b8"/><path d="M1 7c0 3 3 4 6 3l-1 2 4-2-4-3v2c-2 0-3-1-3-3z" fill="#d83030"/></symbol>
<symbol id="v13" viewBox="0 0 24 24"><circle cx="12" cy="11" r="10" fill="#c0c0c8" stroke="#888"/><circle cx="12" cy="11" r="5" fill="#e8e8f0"/><path d="M2 22c4-2 7-4 9-7 4 0 10-1 10-7l-4 3-3-1 1-5c-4 0-6 3-6 7-2 2-5 4-7 6z" fill="#e8d058" stroke="#8a7a30" stroke-width=".6"/></symbol>
<symbol id="v14" viewBox="0 0 24 24"><path d="M1 5h17v18H1z" fill="#fff" stroke="#8a80a8"/><text x="3" y="21" class="atxt">A</text><path d="M14 10l8-9 2 2-8 9-3 1z" fill="#e8b030" stroke="#805020" stroke-width=".5"/></symbol>
<symbol id="v15" viewBox="0 0 24 24"><path d="M3 16L18 2l5 5L8 21z" fill="#e8d050" stroke="#807020" stroke-width=".6"/><path d="M3 16l5 5-3 2-4-3z" fill="#30a080"/></symbol>
<symbol id="v16" viewBox="0 0 24 24"><path d="M1 6h22v17H1z" fill="#e4e8f8" stroke="#a0a8d0"/><path d="M14 17h8v3h-8z" fill="#b0b4c8"/><path d="M12 1c3 2 3 6 1 9-1-3-2-6-1-9z" fill="#e87820"/></symbol>
<symbol id="v17" viewBox="0 0 24 24"><path d="M6 1h12l4 4v15H6z" fill="#fff" stroke="#222" stroke-width="1.300"/><path d="M2 5h4v17h14" fill="#eee" stroke="#222" stroke-width="1.300"/></symbol>
<symbol id="v18" viewBox="0 0 24 24"><path d="M1 23v-8l8-3 12-8h2v19z" fill="#2a9090"/><path d="M7 1v11" stroke="#2a70c0" stroke-width="2"/><circle cx="7" cy="14" r="4" fill="#f0e040"/></symbol>
<symbol id="v19" viewBox="0 0 24 24"><path d="M2 7h21v16H2z" fill="#eef0fa" stroke="#a0a8d0"/><path d="M8 6v12" stroke="#2a3ab0"/><circle cx="8" cy="18" r="2.500" fill="#e02020"/><path d="M14 15h7M14 18h7M14 21h7" stroke="#aaa"/><use href="#gk"/></symbol>
<symbol id="v21" viewBox="0 0 24 24"><path d="M2 5h13V1l8 7-8 7v-4H2z" fill="#e09040" stroke="#906020" stroke-width=".6"/><path d="M22 14H9v-3l-8 7 8 6v-4h13z" fill="#40b040" stroke="#207020" stroke-width=".6"/></symbol>
<symbol id="v22" viewBox="0 0 24 24"><path d="M2 1h7v17H2z" fill="#d8d8d8" stroke="#555"/><circle cx="5" cy="5" r="2" fill="#777"/><circle cx="5" cy="10" r="2" fill="#777"/><circle cx="5" cy="14" r="2" fill="#777"/><path d="M13 3c0-3 9-3 9 0v11c0 3-9 3-9 0z" fill="#4a90a0" stroke="#444"/><path d="M8 23c4-1 6-3 7-5 3 0 7 0 8-4l-14 8z" fill="#e8d058" stroke="#8a7a30" stroke-width=".6"/></symbol>
<symbol id="v23" viewBox="0 0 24 24"><path d="M1 2h22v20H1z" fill="#1a7a88" stroke="#134"/><path d="M3 4h18v5H3z" fill="#dff"/><path d="M4 11h3v2H4zM9 11h3v2H9zM14 11h3v2h-3zM19 11h2v2h-2zM4 15h3v2H4zM9 15h3v2H9zM14 15h3v2h-3zM19 15h2v2h-2z" fill="#fff"/></symbol>
<symbol id="v24" viewBox="0 0 24 24"><path d="M0 0h24v24H0z" fill="#c8d4dc"/><circle cx="12" cy="12" r="10" fill="#cfe4f4" stroke="#7aa8c8" stroke-width="1.500"/><path d="M12 5v7h6" stroke="#d04040" stroke-width="1.300" fill="none"/></symbol>
<symbol id="oa" viewBox="0 0 24 24"><use href="#opb" transform="scale(.85)"/><path d="M9 7h14v16H9z" fill="#e4e8fa" stroke="#4a55b8"/><path d="M11 10h3v3h-3zM11 15h3v3h-3zM16 11h5M16 16h5M11 20h10" stroke="#4a55b8" fill="none"/></symbol>
<symbol id="on" viewBox="0 0 24 24"><use href="#opb" transform="scale(.8)"/><path d="M9 12l10-10 3 3-10 10h-3z" fill="#e8b030" stroke="#602010" stroke-width=".6"/><path d="M2 16h20v7H2z" fill="#fff" stroke="#2a1a88" stroke-width="1.500"/><text x="4" y="22" class="mini dark">ABC</text></symbol>
<symbol id="mop" viewBox="0 0 24 24"><path d="M2 9h6v14H2z" fill="#4a55b8"/><path d="M3 10h2v12H3z" fill="#a4ace8"/><path d="M8 13l14-3v1.500L8 15zM8 17l11-2v1.500L8 19zM8 20l8-1v1.500L8 22z" fill="#999"/><g transform="translate(2 -1) scale(.9)"><use href="#gk"/></g></symbol>
<symbol id="mpg" viewBox="0 0 24 24"><path d="M1 6h13v11H1z" fill="#dfe3f8" stroke="#2a3ab0"/><path d="M7 11h15v12H7z" fill="#f0f2ff" stroke="#2a3ab0"/><path d="M3 9h8M3 12h3M9 14h11M9 17h11M9 20h11" stroke="#2a3ab0" stroke-dasharray="1 1"/><g transform="translate(9 -1) scale(.9)"><use href="#gk"/></g></symbol>
<symbol id="mtool" viewBox="0 0 24 24"><path d="M2 11h6l-1 12-5-3z" fill="#6a90d8" stroke="#223" stroke-width=".6"/><path d="M13 1h8v15h-8z" fill="#555"/><path d="M14 14h6v6h-6z" fill="#f0c030" stroke="#643"/><g transform="translate(-1 0) scale(.9)"><use href="#gk"/></g></symbol>
<symbol id="mgeom" viewBox="0 0 24 24"><path d="M6 7l12-3 5 4v11l-12 4-8-4z" fill="#4a5cd8"/><path d="M6 7l12-3 5 4-12 3z" fill="#b0bcf0"/><circle cx="6" cy="17" r="4" fill="#f0c020" stroke="#d02020" stroke-width="1.500"/><circle cx="11" cy="15" r="3" fill="#f08020" stroke="#d02020"/><g transform="translate(0 -1) scale(.9)"><use href="#gk"/></g></symbol>
<symbol id="mmeth" viewBox="0 0 24 24"><path d="M1 9h22M1 9v14h22V9" fill="none" stroke="#1a5a90" stroke-width="1.200"/><path d="M1 14h22v1H1zM1 19l4-3 4 3 4-3 4 3 4-3 2 2" fill="#cfe0f0" stroke="#1a5a90" stroke-width=".8"/><g transform="translate(1 -1) scale(.9)"><use href="#gk"/></g></symbol>
<symbol id="bulb" viewBox="0 0 10 18"><path d="M2 1c1-1 5-1 6 0 1 2-1 8-2 11H4C3 9 1 3 2 1z" fill="#f6e030" stroke="#a89020" stroke-width=".7"/><circle cx="5" cy="15.500" r="1.800" fill="#f6e030" stroke="#a89020" stroke-width=".6"/></symbol>
<symbol id="folder" viewBox="0 0 16 14"><path d="M1 3h5l1-2h4l1 2h3v10H1z" fill="#ecd890" stroke="#8a7a40"/><path d="M8 4h6v8H8z" fill="#fff" stroke="#1a1ad0"/><path d="M10 6h3M10 8h3M10 10h3" stroke="#1a1ad0"/></symbol>
<symbol id="caveop" viewBox="0 0 16 16"><path d="M3 1h5v10H3z" fill="#3a70c8"/><path d="M8 4h7M8 7h5" stroke="#3a90c8"/><path d="M1 13l7-5 7 5-7 3z" fill="#2a8a9a"/><path d="M3 12l4-3" stroke="#112"/></symbol>
<symbol id="col" viewBox="0 0 10 16"><path d="M1 1h8v14H1z" fill="#3a4ab0"/><path d="M2 2h2v12H2zM6 2h2v12H6z" fill="#8090d8"/></symbol>
</defs>
</svg>
<div class="app">
  <header class="titlebar">
    <span class="nx">NX</span><span class="title">NX 10 - 加工 - [50-3.prt （修改的） ]</span>
  </header>
  <nav class="menubar">
    <span class="grip-v"></span>
    <svg class="i small"><use href="#opb"/></svg>
    <span class="mn first">文件(<u>F</u>)</span><span class="mn">编辑(<u>E</u>)</span><span class="mn">视图(<u>V</u>)</span><span class="mn">插入(<u>S</u>)</span><span class="mn">格式(<u>R</u>)</span><span class="mn">工具(<u>T</u>)</span><span class="mn">装配(<u>A</u>)</span><span class="mn">信息(<u>I</u>)</span><span class="mn">分析(<u>L</u>)</span><span class="mn wide">首选项(<u>P</u>)</span><span class="mn">窗口(<u>O</u>)</span><span class="mn">GC工具箱</span><span class="mn">燕秀UG模具7.05</span><span class="mn">星空 V6.936F</span><span class="mn">帮助(<u>H</u>)</span><span class="mn">机明软件</span><span class="mn">HB_MOULD <u>M</u>6.6</span>
  </nav>
  <div class="tb-row">
    <div class="grp">
      <span class="grip"></span><svg class="i m6"><use href="#start"/></svg><span class="tx">启动</span><span class="dd m3"></span>
      <svg class="i m6"><use href="#new"/></svg><svg class="i m9"><use href="#open"/></svg><svg class="i m9"><use href="#save"/></svg><svg class="i m9"><use href="#print"/></svg><span class="sep m7"></span>
      <svg class="i m7"><use href="#cut"/></svg><svg class="i m9"><use href="#copy"/></svg><svg class="i m9"><use href="#paste"/></svg><svg class="i m9"><use href="#x"/></svg><span class="sep m8"></span>
      <svg class="i m6"><use href="#undo"/></svg><span class="dd m8"></span><span class="sep m5"></span>
      <svg class="i m6"><use href="#wcs"/></svg><span class="dd m8"></span><svg class="i m11"><use href="#infod"/></svg><span class="sep m9"></span>
      <div class="search m6"><span>查找命令</span><svg class="glass"><use href="#glass"/></svg></div><span class="dd low m7"></span>
    </div>
    <div class="grp m1">
      <span class="grip"></span><div class="combo c-size m6"><span>10</span><span class="dd"></span></div>
      <svg class="i m9"><use href="#layers"/></svg><svg class="i m9"><use href="#csys2"/></svg><span class="dd m7"></span><span class="sep m4"></span>
      <svg class="i m8"><use href="#hand"/></svg><svg class="i m8"><use href="#palette"/></svg><span class="sep m7"></span>
      <svg class="i m6"><use href="#diamt"/></svg><span class="dd m9"></span><span class="sep m4"></span>
      <svg class="i m6"><use href="#hatch"/></svg><span class="dd m9"></span><svg class="i m6"><use href="#ruler"/></svg><span class="dd low m7"></span>
    </div>
    <div class="grp m20">
      <span class="grip"></span><svg class="i m4"><use href="#fit"/></svg><span class="dd m9"></span><svg class="i m7"><use href="#bracket"/></svg><span class="dd m7"></span><svg class="i m6"><use href="#cube"/></svg><span class="dd m8"></span><svg class="i m6"><use href="#planeo"/></svg><svg class="i m9"><use href="#planeg"/></svg>
    </div>
  </div>
  <div class="tb-row">
    <div class="grp m10">
      <span class="grip"></span><svg class="i m6"><use href="#ow"/></svg><svg class="i m10"><use href="#os"/></svg><svg class="i m9"><use href="#oc"/></svg><svg class="i m9"><use href="#ocg"/></svg><svg class="i m7 dim"><use href="#paste"/></svg><svg class="i m11"><use href="#ox"/></svg><svg class="i m8"><use href="#oi"/></svg><svg class="i m8"><use href="#ogr"/></svg><span class="dd low m8"></span>
    </div>
    <div class="grp m23">
      <span class="grip"></span><svg class="i m7"><use href="#gen"/></svg><svg class="i m9"><use href="#replay"/></svg><svg class="i m9"><use href="#chk"/></svg><svg class="i m9"><use href="#sdoc"/></svg><svg class="i m9"><use href="#chkm"/></svg><svg class="i m9"><use href="#book"/></svg><span class="sep m7"></span><svg class="i m5"><use href="#post"/></svg><svg class="i m11"><use href="#docb"/></svg><svg class="i m8"><use href="#oclock"/></svg><span class="dd low m7"></span>
    </div>
    <div class="grp m34">
      <span class="grip"></span><span class="act m2"><svg class="i"><use href="#tprog"/></svg></span><svg class="i m4"><use href="#ttool"/></svg><svg class="i m9"><use href="#tgeom"/></svg><svg class="i m9"><use href="#tmeth"/></svg><span class="dd low m7"></span>
    </div>
    <div class="grp m160">
      <span class="grip"></span><svg class="i m8"><use href="#sh1"/></svg><svg class="i m8"><use href="#sh2"/></svg><span class="dd m8"></span><svg class="i m6"><use href="#sh3"/></svg><span class="dd m8"></span><svg class="i m6"><use href="#tl"/></svg><span class="dd m8"></span><span class="dd low m4"></span>
    </div>
    <div class="grp">
      <span class="grip"></span><svg class="wide42 m5"><use href="#grid"/></svg>
    </div>
  </div>
  <div class="tb-row">
    <div class="grp m8">
      <span class="grip"></span><svg class="i m8"><use href="#abs"/></svg><svg class="i m8"><use href="#xd"/></svg><svg class="i m9"><use href="#sheets"/></svg><svg class="i m9"><use href="#la"/></svg><svg class="i m9"><use href="#ra"/></svg><svg class="i m9"><use href="#dia2"/></svg><svg class="i m11"><use href="#sq2"/></svg><svg class="i m7"><use href="#tee"/></svg><svg class="i m9"><use href="#cubep"/></svg><svg class="i m9"><use href="#wirep"/></svg><svg class="i m10"><use href="#rarc"/></svg><svg class="i m9"><use href="#wirer"/></svg><svg class="i m9"><use href="#surf"/></svg><svg class="i m9"><use href="#stripes"/></svg><svg class="i m8"><use href="#infoc"/></svg><svg class="i m9"><use href="#cyl"/></svg><svg class="i m9"><use href="#cuber"/></svg><svg class="i m9"><use href="#planep"/></svg><svg class="i m9"><use href="#cubearr"/></svg><svg class="i m8"><use href="#cubeax"/></svg><svg class="i m10"><use href="#rect"/></svg><span class="dd m8"></span><svg class="i m7"><use href="#hexo"/></svg><span class="dd m7"></span><svg class="i m7"><use href="#xyz"/></svg><svg class="i m8"><use href="#redt"/></svg><svg class="i m9"><use href="#oo"/></svg><svg class="i m9"><use href="#textt"/></svg><svg class="i m10"><use href="#ghost"/></svg><svg class="i m9"><use href="#lamp"/></svg><svg class="i m8"><use href="#circ"/></svg><span class="dd low m7"></span>
    </div>
    <div class="grp m89">
      <span class="grip"></span><span class="act m3"><svg class="i"><use href="#seq1"/></svg></span><svg class="i m4"><use href="#seq2"/></svg><span class="sep m8"></span><svg class="i m5"><use href="#bino"/></svg><svg class="i m8"><use href="#tag"/></svg>
    </div>
  </div>
  <div class="tb-row last">
    <div class="combo c-filter m6"><span>无选择过滤器</span><span class="dd"></span></div>
    <div class="combo c-asm m7"><span>整个装配</span><span class="dd"></span></div>
    <svg class="i m7"><use href="#link"/></svg><span class="sep m9"></span><svg class="i m5"><use href="#fun"/></svg><svg class="i m8"><use href="#redf"/></svg><span class="dd m6"></span><svg class="i m5"><use href="#undot"/></svg><svg class="i m10"><use href="#binot"/></svg><span class="sep m7"></span><svg class="i m8"><use href="#hexd"/></svg><svg class="i m8"><use href="#dash"/></svg><span class="dd m7"></span><span class="sep m5"></span><svg class="i m7"><use href="#gbox"/></svg><span class="act m5"><svg class="i"><use href="#acube"/></svg></span>
  </div>
  <main class="main">
    <aside class="side">
      <svg class="si gear-i"><use href="#gear"/></svg>
      <svg class="si first-tab"><use href="#cubes"/></svg>
      <svg class="si"><use href="#bow"/></svg>
      <svg class="si"><use href="#cylt"/></svg>
      <span class="tab"><svg class="si-in"><use href="#optree"/></svg></span>
      <svg class="si"><use href="#tbl"/></svg>
      <svg class="si"><use href="#mach"/></svg>
      <svg class="si"><use href="#books"/></svg>
      <svg class="si far"><use href="#wifi"/></svg>
      <svg class="si far"><use href="#docg"/></svg>
      <svg class="si far"><use href="#clock"/></svg>
      <svg class="si"><use href="#wand"/></svg>
      <svg class="si"><use href="#opw"/></svg>
      <svg class="si"><use href="#tools"/></svg>
      <svg class="si"><use href="#bk1"/></svg>
      <svg class="si"><use href="#bk2"/></svg>
      <svg class="si"><use href="#door"/></svg>
    </aside>
    <section class="panel">
      <div class="panel-head"><span>工序导航器 - 程序顺序</span><span class="maxi"></span></div>
      <div class="table">
        <div class="tr head"><span class="c0">名称</span><span>换刀</span><span>刀轨</span><span>刀具</span><span>几何体</span><span></span></div>
        <div class="tr"><span class="c0 black root">NC_PROGRAM</span><span></span><span></span><span></span><span></span><span></span></div>
        <div class="tr alt"><span class="c0 black node l1"><svg class="fold"><use href="#folder"/></svg><b>未用项</b></span><span></span><span></span><span></span><span></span><span></span></div>
        <div class="tr"><span class="c0 node l2 hirow"><span class="minus"></span><svg class="bulb"><use href="#bulb"/></svg><svg class="fold"><use href="#folder"/></svg><b class="sel">PROGRAM</b></span><span class="bl"></span><span class="bl"></span><span class="bl"></span><span class="bl"></span><span class="bl"></span></div>
        <div class="tr alt"><span class="c0 black node l3"><svg class="bulb"><use href="#bulb"/></svg><svg class="caveop"><use href="#caveop"/></svg><b class="pur">CAVITY_MILL</b></span><span class="lead col-pad"><svg class="colic"><use href="#col"/></svg></span><span class="lead check">✔</span><span class="pur pad">D10</span><span class="pur pad">WORKPI...</span><span></span></div>
        <div class="filler"><span class="f0"></span><span></span><span></span><span></span><span></span><span></span></div>
        <div class="hscroll"><span class="arr-l"></span><span class="thumb">|||</span><span class="arr-r"></span></div>
      </div>
      <div class="panel-foot"></div>
    </section>
    <aside class="vbar">
      <span class="grip-h"></span>
      <svg class="vi"><use href="#v1"/></svg><svg class="vi"><use href="#v2"/></svg><svg class="vi"><use href="#v3"/></svg><svg class="vi"><use href="#gen"/></svg><svg class="vi"><use href="#v5"/></svg><svg class="vi dim"><use href="#oc"/></svg><svg class="vi"><use href="#v7"/></svg><svg class="vi"><use href="#v8"/></svg><svg class="vi dim2"><use href="#ow"/></svg><svg class="vi"><use href="#v10"/></svg><svg class="vi"><use href="#post"/></svg><svg class="vi"><use href="#v12"/></svg><svg class="vi"><use href="#v13"/></svg><svg class="vi"><use href="#v14"/></svg><svg class="vi"><use href="#v15"/></svg><svg class="vi"><use href="#v16"/></svg><svg class="vi"><use href="#v17"/></svg><svg class="vi"><use href="#v18"/></svg><svg class="vi"><use href="#v19"/></svg><svg class="vi"><use href="#print"/></svg><svg class="vi"><use href="#v21"/></svg><svg class="vi"><use href="#v22"/></svg><svg class="vi"><use href="#v23"/></svg><svg class="vi"><use href="#v24"/></svg>
    </aside>
    <section class="canvas"></section>
  </main>

  <svg class="scene" viewBox="522 189 663 748">
    <g class="model">
      <path d="M945 569L1007 574 992 600 1003 639 1043 643 1066 602 1088 673 985 665 969 653z" fill="#cdcdcd"/>
      <path d="M945 569L969 653 949 691 924 608z" fill="#7a7a7a"/>
      <path d="M969 653L985 665 965 703 949 691z" fill="#5f5f5f"/>
      <path d="M985 665L1088 673 1067 712 965 703z" fill="#484848"/>
      <path d="M1039 514L1052 517 1045 532z" fill="#cdcdcd"/>
      <path d="M1038 515L1049 554 1003 639 992 600z" fill="#7a7a7a"/>
      <path d="M1049 554L1088 557 1043 643 1003 639z" fill="#484848"/>
      <path d="M1046 538L1083 542 1088 557 1049 554z" fill="#cdcdcd"/>
      <path d="M1073 490L1109 493 1083 541 1046 537z" fill="#484848"/>
      <path d="M1070 483L1073 490 1046 537 1044 532z" fill="#7a7a7a"/>
      <path d="M1070 483L1108 488 1109 492 1073 490z" fill="#d8d8d8"/>
    </g>
    <path d="M1090 487L1067 411" stroke="#2f9a30" stroke-width="1.500"/>
    <path d="M1078 445L1084 458 1090 487 1078 460zM1067 411L1075 427 1070 425 1065 428z" fill="#2f9a30"/>
    <path d="M1090 487L1128 419" stroke="#1a3fd0" stroke-width="1.500"/>
    <path d="M1112 440L1107 459 1090 487 1103 458zM1128 419L1126 436 1121 431 1115 433z" fill="#1a3fd0"/>
    <path d="M1090 487L1185 497" stroke="#e03c3c" stroke-width="1.500"/>
    <path d="M1090 487L1130 488 1142 491 1130 493zM1185 497L1165 491 1167 497 1165 502z" fill="#e03c3c"/>
    <text x="1069" y="409" class="ax g">YM</text><text x="1108" y="417" class="ax b">ZM</text><text x="1080" y="445" class="ax g">YC</text><text x="1092" y="449" class="ax b">ZC</text><text x="1125" y="507" class="ax r">XC</text><text x="1167" y="510" class="ax r">XM</text>
    <path d="M588 883L607 883 617 902 608 919 588 922 579 899z" fill="#a2a2a2"/>
    <path d="M598 902L588 883M598 902L617 902M598 902L588 922" stroke="#b8b8b8"/>
    <path d="M584 919L575 886" stroke="#2f9a30" stroke-width="2.500"/><path d="M584 919L600 892" stroke="#1a3fd0" stroke-width="3"/><path d="M584 919L622 922" stroke="#d83030" stroke-width="2"/>
    <circle cx="584" cy="919" r="4" fill="#ddd"/>
    <text x="569" y="887" class="ax small-ax g">Y</text><text x="598" y="889" class="ax small-ax b">Z</text><text x="624" y="927" class="ax small-ax r">X</text>
    <g class="logo">
      <path d="M938 883L938 843 973 862z" fill="#7f9aab"/><path d="M938 883L973 862 973 903z" fill="#24769f"/><path d="M938 883L973 903 938 923z" fill="#10608e"/><path d="M938 883L938 923 902 903z" fill="#2a7ca6"/><path d="M938 883L902 903 902 862z" fill="#5687a4"/><path d="M938 883L902 862 938 843z" fill="#7b96a8"/>
      <path d="M938 843c10 8 18 20 18 30M973 862c-3 13-12 25-20 29M973 903c-13-3-27-6-35 3M938 923c-10-8-17-20-17-32M902 903c3-12 10-25 19-29M902 862c13 3 27 6 36-3" fill="none" stroke="#24252a" stroke-width="1.200"/>
      <path d="M938 859L959 871 959 896 938 908 917 896 917 871z" fill="#24252a"/>
      <path d="M938 865L954 874 938 883 922 874z" fill="#6f93a8"/><path d="M922 875L937 884 937 902 922 893z" fill="#4d83a3"/><path d="M954 875L939 884 939 902 954 893z" fill="#1b6b98"/>
      <text x="982" y="888" class="lg3">3D<tspan class="lgc" dx="9">世界网</tspan></text>
      <text x="983" y="910" class="lgu" textLength="175" lengthAdjust="spacingAndGlyphs">WWW.3DSJW.COM</text>
    </g>
  </svg>
  <svg class="arrow2" viewBox="368 600 166 94"><path d="M532 692L392 617 386 623 370 605 401 608 395 614z" fill="#f0474a"/></svg>

  <div class="ctx">
    <div class="mi bold"><svg class="mic"><use href="#ow"/></svg><span>编辑...</span></div>
    <div class="mi"><svg class="mic"><use href="#os"/></svg><span>剪切</span></div>
    <div class="mi"><svg class="mic"><use href="#oc"/></svg><span>复制</span></div>
    <div class="mi"><svg class="mic"><use href="#ox"/></svg><span>删除</span></div>
    <div class="mi"><svg class="mic"><use href="#on"/></svg><span>重命名</span></div>
    <div class="msep"></div>
    <div class="mi"><svg class="mic"><use href="#gen"/></svg><span>生成</span></div>
    <div class="mi"><svg class="mic"><use href="#genp"/></svg><span>并行生成</span></div>
    <div class="mi"><svg class="mic"><use href="#replay"/></svg><span>重播</span></div>
    <div class="msep"></div>
    <div class="mi"><svg class="mic"><use href="#post"/></svg><span>后处理</span></div>
    <div class="msep"></div>
    <div class="mi hi noic"><span>插入</span><i class="sub blue"></i></div>
    <div class="msep"></div>
    <div class="mi noic"><span>对象</span><i class="sub"></i></div>
    <div class="msep"></div>
    <div class="mi noic"><span>刀轨</span><i class="sub"></i></div>
    <div class="msep"></div>
    <div class="mi noic"><span>工件</span><i class="sub"></i></div>
    <div class="msep"></div>
    <div class="mi noic"><span>工作指导</span><i class="sub"></i></div>
    <div class="msep"></div>
    <div class="mi"><svg class="mic"><use href="#oi"/></svg><span>信息</span></div>
    <div class="mi"><svg class="mic"><use href="#oa"/></svg><span>属性</span></div>
  </div>
  <div class="ctx submenu">
    <div class="mi hi"><svg class="mic"><use href="#mop"/></svg><span>工序...</span></div>
    <div class="mi"><svg class="mic"><use href="#mpg"/></svg><span>程序组...</span></div>
    <div class="mi"><svg class="mic"><use href="#mtool"/></svg><span>刀具...</span></div>
    <div class="mi"><svg class="mic"><use href="#mgeom"/></svg><span>几何体...</span></div>
    <div class="mi"><svg class="mic"><use href="#mmeth"/></svg><span>方法...</span></div>
  </div>

  <svg class="arrow1" viewBox="40 285 80 145"><path d="M47 424L98 307 92 305 107 289 114 312 107 310 49 425z" fill="#f0474a"/></svg>
  <span class="badge b1">1</span>
  <div class="tip t1">在此<br>右击</div>
  <span class="badge b2">2</span>
  <div class="tip t2">点工序</div>
</div>
</body>
</html>
```

FILE: styles.css
```css
* { box-sizing: border-box; }
html, body { margin: 0; padding: 0; height: 100%; overflow: hidden; background: #fff; }
body { font-family: "Liberation Sans", "Noto Sans CJK SC", sans-serif; font-size: 11px; color: #222; }
.defs { position: absolute; width: 0; height: 0; }
.app { position: relative; width: 1185px; height: 937px; overflow: hidden; display: flex; flex-direction: column; }

/* title + menu */
.titlebar { height: 26px; display: flex; align-items: center; background: #fff; flex: none; }
.nx { width: 41px; height: 22px; line-height: 22px; padding-left: 3px; font-size: 24px; font-weight: 700; color: #8ba3b5; border-right: 1px solid #ddd; }
.title { margin-left: 5px; font-size: 13px; color: #222; }
.menubar { height: 27px; flex: none; display: flex; align-items: center; padding-bottom: 3px; background: #c7d7d5; color: #333; font-size: 11px; font-family: "Noto Sans CJK SC", sans-serif; }
.grip-v { width: 2px; height: 18px; margin-left: 3px; border-left: 2px dotted #8a9a98; }
.i.small { width: 16px; height: 16px; margin-left: 4px; }
.mn { margin-left: 13.500px; white-space: nowrap; }
.mn.first { margin-left: 5px; }
.mn.wide { margin-left: 19.500px; }

/* toolbars */
.tb-row { height: 34px; flex: none; display: flex; align-items: flex-start; background: #fafafa; overflow: hidden; }
.tb-row.last { height: 33px; align-items: center; background: #fff; }
.grp { flex: none; display: flex; align-items: center; height: 33px; padding-right: 4px; background: #fff; border-right: 2px solid #e2e2e2; border-bottom: 2px solid #e2e2e2; }
.grip { width: 2px; height: 24px; margin-left: 3px; border-left: 2px dotted #aaa; flex: none; }
.i { width: 22px; height: 22px; flex: none; }
.wide42 { width: 42px; height: 24px; flex: none; }
.dim { opacity: .45; }
.dim2 { opacity: .7; }
.tx { font-size: 11px; font-family: "Noto Sans CJK SC", sans-serif; width: 23px; margin-left: 5px; flex: none; white-space: nowrap; }
.dd { width: 7px; height: 4px; flex: none; border-left: 3.500px solid transparent; border-right: 3.500px solid transparent; border-top: 4px solid #222; }
.dd.low { align-self: flex-end; margin-bottom: 6px; }
.sep { width: 1px; height: 26px; background: #ccc; flex: none; }
.act { display: flex; align-items: center; justify-content: center; width: 31px; height: 30px; flex: none; background: #c7d7d5; border: 1px solid #9ab0ae; }
.combo { height: 20px; flex: none; display: flex; align-items: center; justify-content: space-between; padding: 0 6px 0 3px; background: #fff; border: 1px solid #a8a8a8; font-size: 12px; font-family: "Noto Sans CJK SC", sans-serif; }
.c-size { width: 49px; }
.c-filter { width: 132px; }
.c-asm { width: 140px; }
.search { width: 125px; height: 22px; flex: none; display: flex; align-items: center; justify-content: space-between; padding: 0 2px 0 2px; border: 1px solid #a8a8a8; font-size: 12px; font-family: "Noto Sans CJK SC", sans-serif; }
.glass { width: 16px; height: 16px; }

.m1 { margin-left: 1px; } .m2 { margin-left: 2px; } .m3 { margin-left: 3px; } .m4 { margin-left: 4px; } .m5 { margin-left: 5px; } .m6 { margin-left: 6px; } .m7 { margin-left: 7px; } .m8 { margin-left: 8px; } .m9 { margin-left: 9px; } .m10 { margin-left: 10px; } .m11 { margin-left: 11px; } .m20 { margin-left: 20px; } .m23 { margin-left: 23px; } .m34 { margin-left: 34px; } .m89 { margin-left: 89px; } .m160 { margin-left: 160px; }

/* main area */
.main { flex: 1; min-height: 0; display: flex; border-top: 1px solid #8f8f8f; }
.side { width: 32px; flex: none; display: flex; flex-direction: column; align-items: center; background: #dcdcdc; border-right: 2px solid #aaa; }
.si { width: 24px; height: 24px; margin-top: 18px; flex: none; }
.si.gear-i { width: 18px; height: 18px; margin-top: 5px; }
.si.first-tab { margin-top: 27px; }
.si.far { margin-top: 29px; }
.tab { width: 30px; height: 45px; margin: 8px 0 -9px 2px; align-self: flex-start; background: #fff; border: 1px solid #aaa; border-right: 0; display: flex; align-items: center; justify-content: center; flex: none; }
.si-in { width: 24px; height: 24px; margin-top: 3px; }

.panel { width: 454px; flex: none; background: #fff; padding: 0 10px 0 6px; display: flex; flex-direction: column; }
.panel-head { height: 29px; flex: none; display: flex; align-items: center; justify-content: space-between; padding: 0 2px 2px 5px; font-size: 12px; color: #333; font-family: "Noto Sans CJK SC", sans-serif; }
.maxi { width: 11px; height: 10px; border: 1px solid #222; border-top-width: 2px; }
.table { border-top: 1px solid #ddd; border-left: 2px solid #e2e2e2; height: 704px; flex: none; display: flex; flex-direction: column; }
.tr { display: grid; grid-template-columns: 207px 46px 42px 65px 73px 5px; height: 20px; flex: none; border-bottom: 1px solid #e8e8e8; font-size: 12px; line-height: 20px; }
.tr > span { border-right: 1px solid #e8e8e8; white-space: nowrap; overflow: hidden; }
.tr.alt { background: #f9f9f9; }
.tr.head { background: #f0f0f0; color: #444; font-family: "Noto Sans CJK SC", sans-serif; height: 21px; line-height: 19px; }
.tr.head > span { padding-left: 5px; border-right: 1px solid #d8d8d8; }
.tr.head .c0 { padding-left: 6px; }
.black { border-right: 1px solid #111 !important; }
.root { padding-left: 4px; }
.node { display: flex; align-items: center; position: relative; }
.node b { font-weight: 400; }
.node.l1 { padding-left: 20px; }
.node.l1 b { margin-left: 3px; font-family: "Noto Sans CJK SC", sans-serif; }
.node.l1::before { content: ""; position: absolute; left: 9px; top: 9px; width: 10px; height: 20px; border-left: 1px dotted #888; border-top: 1px dotted #888; }
.node.l2 { padding-left: 5px; }
.tr .hirow { overflow: visible; border-right: 0; }
.minus { width: 9px; height: 9px; border: 1px solid #aaa; background: linear-gradient(#333, #333) center/5px 1px no-repeat #fff; flex: none; }
.l2 .bulb { margin-left: 10px; }
.bulb { width: 9px; height: 17px; flex: none; }
.fold { width: 15px; height: 14px; flex: none; }
.l2 .fold { margin-left: 2px; }
.sel { background: #39f; color: #fff; height: 20px; flex: 1; padding-left: 3px; margin-left: 0; line-height: 20px; }
.bl { background: #39f; border-right: 1px solid #fff !important; }
.node.l3 { padding-left: 41px; overflow: hidden; }
.node.l3::before { content: ""; position: absolute; left: 27px; top: -9px; width: 13px; height: 18px; border-left: 1px dotted #888; border-bottom: 1px dotted #888; }
.caveop { width: 14px; height: 14px; margin-left: 7px; flex: none; }
.pur { color: #7a44d8; }
.l3 .pur { margin-left: 2px; }
.pad { padding-left: 4px; }
.lead { display: flex; align-items: center; }
.col-pad { padding-left: 6px; }
.colic { width: 9px; height: 14px; }
.check { color: #17b52c; font-size: 16px; padding-left: 5px; font-family: "DejaVu Sans", sans-serif; }
.filler { flex: 1; min-height: 0; display: grid; grid-template-columns: 207px 46px 42px 65px 73px 5px; background: repeating-linear-gradient(#fff 0 19px, #e8e8e8 19px 20px, #f9f9f9 20px 39px, #e8e8e8 39px 40px); }
.filler > span { border-right: 1px solid #e8e8e8; }
.filler > .f0 { border-right-color: #111; }
.hscroll { height: 16px; flex: none; display: flex; align-items: center; background: #f0f0f0; border-top: 1px solid #e0e0e0; }
.arr-l { width: 0; height: 0; margin-left: 6px; border: 4px solid transparent; border-right-color: #333; border-left: 0; flex: none; }
.thumb { width: 248px; height: 14px; margin-left: 8px; background: linear-gradient(#e8e8e8, #bdbdbd); border: 1px solid #999; border-radius: 2px; text-align: center; line-height: 11px; font-size: 8px; color: #444; flex: none; }
.arr-r { width: 0; height: 0; margin-left: 159px; border: 4px solid transparent; border-left-color: #333; border-right: 0; flex: none; }
.panel-foot { height: 4px; margin-top: 2px; flex: none; background: #ddd; border: 1px solid #bbb; }

.vbar { width: 36px; flex: none; display: flex; flex-direction: column; align-items: center; gap: 7px; background: #fff; border-left: 2px solid #aaa; border-right: 2px solid #f0a04e; padding-left: 1px; overflow: hidden; }
.grip-h { width: 26px; height: 2px; margin-top: 3px; margin-bottom: -3px; border-top: 2px dotted #aaa; flex: none; }
.vi { width: 24px; height: 24px; flex: none; }
.canvas { flex: 1; background: #24252a; box-shadow: inset 0 1px 0 #f0a04e; }

/* scene drawn over the graphics window */
.scene { position: absolute; left: 522px; top: 189px; width: 663px; height: 748px; }
.arrow2 { position: absolute; left: 368px; top: 600px; width: 166px; height: 94px; }
.ax { font-family: "Liberation Sans", sans-serif; font-size: 14px; }
.small-ax { font-size: 13px; }
.g { fill: #2c8f2c; } .b { fill: #1d44d8; } .r { fill: #c83434; }
.lg3 { font-family: "Liberation Sans", sans-serif; font-weight: 700; font-size: 45px; fill: #8a8b8d; }
.lgc { font-family: "Noto Sans CJK SC", sans-serif; font-size: 36px; font-weight: 700; }
.lgu { font-family: "Liberation Sans", sans-serif; font-weight: 700; font-size: 13px; letter-spacing: 1.500px; fill: #8a8b8d; }
.mini { font: 700 6px "Liberation Sans", sans-serif; fill: #222; }
.mini.red { fill: #c03030; }
.mini.blue { fill: #2a3ab0; }
.mini.big { font-size: 9px; }
.ttxt { font: 700 13px "Liberation Serif", serif; fill: #8a50c8; }
.atxt { font: 700 18px "Liberation Serif", serif; fill: #222; }

/* context menus */
.ctx { position: absolute; left: 138px; top: 286px; width: 115px; padding: 2px 0; background: #fff; border: 1px solid #aaa; font-size: 11px; font-family: "Noto Sans CJK SC", sans-serif; color: #222; }
.submenu { left: 250px; top: 586px; width: 113px; }
.mi { height: 30px; display: flex; align-items: center; padding-left: 6px; }
.mi > span { margin-top: -2px; }
.mic { width: 24px; height: 24px; margin-right: 7px; flex: none; }
.bold { font-weight: 700; }
.noic { padding-left: 37px; }
.mi.hi { margin: 0 2px; background: #fdf4dc; border: 1px solid #f5d68a; }
.mi.hi.noic { padding-left: 34px; }
.submenu .mi { padding-left: 5px; }
.submenu .mic { margin-right: 8px; }
.submenu .mi.hi { padding-left: 2px; }
.sub { width: 0; height: 0; margin-left: auto; margin-right: 7px; border: 4px solid transparent; border-left-color: #222; border-right: 0; }
.sub.blue { border-left-color: #2f88b8; }
.msep { height: 1px; margin: 4px 18px 4px 20px; background: #d0d0d0; }

/* annotations */
.arrow1 { position: absolute; left: 40px; top: 285px; width: 80px; height: 145px; }
.badge { position: absolute; width: 20px; height: 20px; border-radius: 50%; background: #f23a3c; color: #fff; font: 12px/20px "Liberation Sans", sans-serif; text-align: center; }
.b1 { left: 32px; top: 418px; }
.b2 { left: 538px; top: 689px; }
.tip { position: absolute; color: #fff; font-size: 24px; font-family: "Noto Sans CJK SC", sans-serif; border-radius: 3px; }
.tip::before { content: ""; position: absolute; left: -4px; width: 0; height: 0; border: 5px solid transparent; border-left: 0; }
.t1 { left: 61px; top: 407px; width: 86px; height: 76px; padding: 5px 6px; line-height: 32px; background: #5d5d5d; }
.t1::before { top: 17px; border-right-color: #5d5d5d; }
.t2 { left: 567px; top: 677px; width: 90px; height: 44px; padding: 0 6px; line-height: 42px; background: #111214; }
.t2::before { top: 17px; border-right-color: #111214; }
```
